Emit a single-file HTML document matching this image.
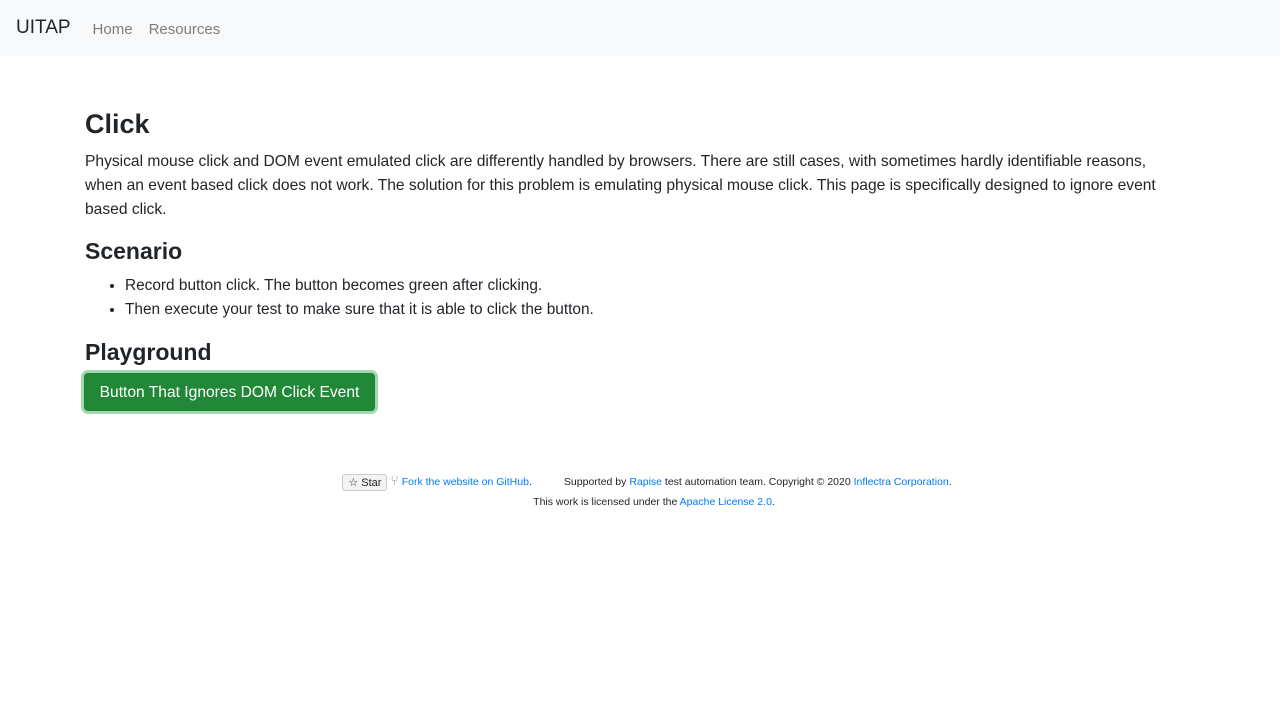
<!DOCTYPE html>
<html><head><meta charset="utf-8"><style>
body{margin:0;font-family:"Liberation Sans",sans-serif;color:#212529;background:#fff}
nav{height:56px;background:#f8f9fa;display:flex;align-items:center;padding:0 16px;box-sizing:border-box}
.brand{font-size:19px;color:#212529;margin-right:22px}
nav a{font-size:15px;color:rgba(0,0,0,.5);margin-right:16px;text-decoration:none;position:relative;top:1px}
h3{font-size:27px;font-weight:bold;margin:0;position:absolute;top:109px;left:85px}
p.m{font-size:15.6px;line-height:24px;margin:0;position:absolute;top:150px;left:85px;width:1150px;white-space:nowrap}
h4{font-size:23px;font-weight:bold;margin:0;position:absolute;left:85px}
ul{position:absolute;top:274px;left:85px;margin:0;padding-left:40px;font-size:15.4px;line-height:24px}
.btn{position:absolute;left:84px;top:373px;width:291px;height:38px;box-sizing:border-box;background:#218838;border:1px solid #1e7e34;border-radius:4px;box-shadow:0 0 0 3px rgba(72,180,97,.5);color:#fff;font-size:15.6px;display:flex;align-items:center;justify-content:center;padding-top:2px}
.f{position:absolute;left:0;width:1280px;text-align:center;font-size:10.5px;color:#212529}
.f a{color:#007bff;text-decoration:none}
.star{display:inline-block;border:1px solid #ccc;border-radius:3px;background:#f3f3f3;padding:1px 5px;font-size:11px;vertical-align:middle}
</style></head><body>
<nav><span class="brand">UITAP</span><a>Home</a><a>Resources</a></nav>
<h3>Click</h3>
<p class="m">Physical mouse click and DOM event emulated click are differently handled by browsers. There are still cases, with sometimes hardly identifiable reasons,<br>when an event based click does not work. The solution for this problem is emulating physical mouse click. This page is specifically designed to ignore event<br>based click.</p>
<h4 style="top:238px">Scenario</h4>
<ul><li>Record button click. The button becomes green after clicking.</li><li>Then execute your test to make sure that it is able to click the button.</li></ul>
<h4 style="top:339px">Playground</h4>
<div class="btn">Button That Ignores DOM Click Event</div>
<div class="f" style="top:472px;padding-left:14px;box-sizing:border-box"><span class="star">☆ Star</span> <span style="color:#999;font-size:14px">⑂</span> <a>Fork the website on GitHub</a>. &nbsp; &nbsp; &nbsp; &nbsp; &nbsp; Supported by <a>Rapise</a> test automation team. Copyright © 2020 <a>Inflectra Corporation</a>.</div>
<div class="f" style="top:496px;padding-left:28px;box-sizing:border-box">This work is licensed under the <a>Apache License 2.0</a>.</div>
</body></html>
